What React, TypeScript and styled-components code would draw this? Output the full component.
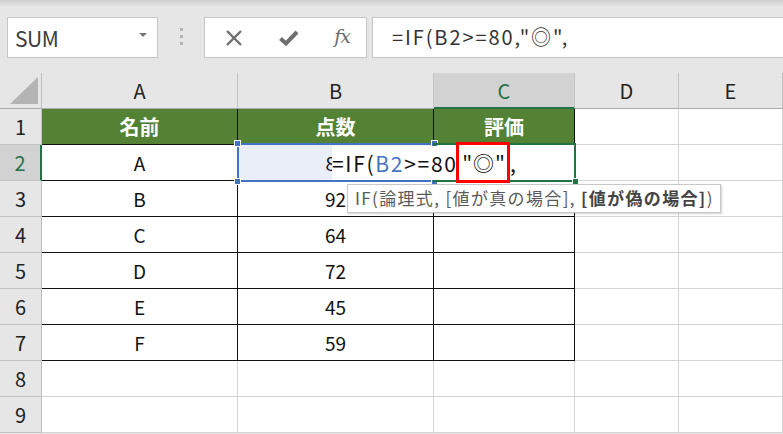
import React from 'react';
import styled, { createGlobalStyle, css } from 'styled-components';

const GlobalStyle = createGlobalStyle`
  html, body {
    margin: 0;
    padding: 0;
    background: #ffffff;
  }
  body {
    font-family: "Noto Sans CJK JP", "Noto Sans", sans-serif;
    color: #222;
  }
`;

const GREEN = '#217346';
const BLUE = '#4472c4';

const Page = styled.div`
  width: 783px;
  height: 434px;
  overflow: hidden;
  background: #e6e6e6;
`;

// toolbar / formula bar
const Toolbar = styled.div`
  height: 73px;
  box-sizing: border-box;
  padding: 17px 0 0 7px;
  display: flex;
  align-items: flex-start;
  background: linear-gradient(#cfcfcf 0px, #e6e6e6 7px);
`;

const NameBox = styled.div`
  width: 151px;
  height: 41px;
  box-sizing: border-box;
  border: 1px solid #c6c6c6;
  background: #fff;
  display: flex;
  align-items: center;
  justify-content: space-between;
  padding: 0 10px 0 7px;
  font-size: 21px;
  color: #3c3c3c;
  letter-spacing: -0.5px;
`;

const DropArrow = styled.span`
  width: 0;
  height: 0;
  border-left: 4px solid transparent;
  border-right: 4px solid transparent;
  border-top: 4px solid #777;
  margin-bottom: 6px;
`;

const Grip = styled.div`
  width: 46px;
  height: 41px;
  display: flex;
  flex-direction: column;
  align-items: center;
  justify-content: center;
  gap: 4px;
  padding-bottom: 2px;
  box-sizing: border-box;
`;

const GripDot = styled.span`
  width: 3px;
  height: 3px;
  background: #b3b3b3;
`;

const ButtonBox = styled.div`
  width: 163px;
  height: 41px;
  box-sizing: border-box;
  border: 1px solid #c6c6c6;
  background: #fff;
  display: grid;
  grid-template-columns: 56px 53px 52px;
  align-items: center;
  justify-items: center;
  padding-left: 1px;
`;

const FxText = styled.span`
  font-family: "DejaVu Serif", "Liberation Serif", serif;
  font-style: italic;
  font-size: 19px;
  color: #6a6a6a;
  letter-spacing: -1px;
  margin: 0 0 3px 2px;
`;

const FormulaBox = styled.div`
  flex: 1;
  margin-left: 5px;
  height: 41px;
  box-sizing: border-box;
  border: 1px solid #c6c6c6;
  border-right: none;
  background: #fff;
  padding-left: 19px;
  line-height: 38px;
  font-size: 20px;
  letter-spacing: 1.9px;
  color: #333;
  white-space: nowrap;
`;

// sheet grid
const Sheet = styled.div`
  position: relative;
  display: grid;
  grid-template-columns: 42px 196px 196px 141px 104px 104px;
  grid-auto-rows: 36px;
  background: #fff;
`;

const Corner = styled.div`
  background: #e6e6e6;
  border-right: 1px solid #bdbdbd;
  border-bottom: 1px solid #ababab;
  box-sizing: border-box;
  display: flex;
  align-items: flex-end;
  justify-content: flex-end;
  padding: 0 3px 4px 0;
`;

const ColHead = styled.div<{ $active?: boolean }>`
  background: ${p => (p.$active ? '#d2d2d2' : '#e6e6e6')};
  border-right: 1px solid #c3c3c3;
  border-bottom: ${p => (p.$active ? `2px solid ${GREEN}` : '1px solid #ababab')};
  box-sizing: border-box;
  display: flex;
  align-items: center;
  justify-content: center;
  font-size: 20px;
  color: ${p => (p.$active ? GREEN : '#222')};
  padding-top: ${p => (p.$active ? '1px' : '0')};
`;

const RowHead = styled.div<{ $active?: boolean }>`
  background: ${p => (p.$active ? '#d2d2d2' : '#e6e6e6')};
  border-right: ${p => (p.$active ? `2px solid ${GREEN}` : '1px solid #bdbdbd')};
  border-bottom: 1px solid #c3c3c3;
  box-sizing: border-box;
  display: flex;
  align-items: center;
  justify-content: center;
  font-size: 20px;
  color: ${p => (p.$active ? GREEN : '#222')};
`;

const Cell = styled.div<{ $boxed?: boolean; $head?: boolean; $fill?: string }>`
  position: relative;
  box-sizing: border-box;
  border-right: 1px solid #d4d4d4;
  border-bottom: 1px solid #d4d4d4;
  display: flex;
  align-items: center;
  justify-content: center;
  font-size: 19px;
  color: #111;
  background: ${p => p.$fill || '#fff'};
  ${p =>
    p.$boxed &&
    css`
      border-right: 1.5px solid #111;
      border-bottom: 1.5px solid #111;
    `}
  ${p =>
    p.$head &&
    css`
      background: #548235;
      color: #fff;
      font-weight: bold;
      font-size: 20px;
    `}
`;

// the value under the in-cell editor, cut off where the editor starts
const ClippedValue = styled.div`
  position: absolute;
  left: 0;
  top: 0;
  bottom: 0;
  width: 94px;
  overflow: hidden;
`;

const ClippedInner = styled.div`
  width: 196px;
  height: 100%;
  display: flex;
  align-items: center;
  justify-content: center;
`;

const SelectFrame = styled.div<{ $color: string }>`
  position: absolute;
  left: -1px;
  top: -2px;
  right: -2px;
  bottom: -2px;
  border: 2px solid ${p => p.$color};
  z-index: 2;
  pointer-events: none;
`;

const Handle = styled.span<{ $color: string; $x: 'l' | 'r'; $y: 't' | 'b' }>`
  position: absolute;
  width: 5px;
  height: 5px;
  background: ${p => p.$color};
  border: 1px solid #fff;
  ${p => (p.$x === 'l' ? 'left: -5px;' : 'right: -5px;')}
  ${p => (p.$y === 't' ? 'top: -5px;' : 'bottom: -5px;')}
`;

const EditOverlay = styled.div`
  position: absolute;
  left: 94px;
  top: 1px;
  height: 34px;
  line-height: 34px;
  background: #fff;
  z-index: 3;
  white-space: nowrap;
  font-size: 21px;
  color: #111;
  padding-right: 4px;
  letter-spacing: 1.7px;
`;

const RefText = styled.span`
  color: ${BLUE};
`;

const RedBox = styled.span`
  position: relative;
  z-index: 1;
  display: inline-block;
  vertical-align: top;
  margin: -4px 0 0 -9px;
  height: 41px;
  line-height: 35px;
  box-sizing: border-box;
  border: 3px solid #ff0000;
  background: #fff;
  padding: 0 1px 0 3px;
  letter-spacing: 1px;
`;

const Tooltip = styled.div`
  position: absolute;
  left: 347px;
  top: 111px;
  height: 29px;
  line-height: 26px;
  box-sizing: border-box;
  padding: 0 6px 0 7px;
  background: #fff;
  border: 1px solid #c8c8c8;
  box-shadow: 1px 1px 2px rgba(0, 0, 0, 0.18);
  font-size: 17px;
  letter-spacing: 1.35px;
  color: #5a5a5a;
  white-space: nowrap;
  z-index: 4;
`;

const Bold = styled.b`
  font-weight: bold;
  color: #444;
`;

const columns = ['A', 'B', 'C', 'D', 'E'];

const rows: Array<[string, string]> = [
  ['A', '85'],
  ['B', '92'],
  ['C', '64'],
  ['D', '72'],
  ['E', '45'],
  ['F', '59'],
];

const CloseIcon = () => (
  <svg width="18" height="18" viewBox="0 0 18 18">
    <path d="M2 2 L16 16 M16 2 L2 16" stroke="#6e6e6e" strokeWidth="2.4" fill="none" />
  </svg>
);

const CheckIcon = () => (
  <svg width="20" height="18" viewBox="0 0 20 18">
    <path d="M1.5 9.5 L7 14.5 L18 3" stroke="#6e6e6e" strokeWidth="4" fill="none" strokeLinejoin="miter" />
  </svg>
);

const CornerMark = () => (
  <svg width="28" height="27" viewBox="0 0 28 27">
    <polygon points="28,0 28,27 0,27" fill="#b4b4b4" />
  </svg>
);

export default function App() {
  return (
    <Page>
      <GlobalStyle />
      <Toolbar>
        <NameBox>
          <span>SUM</span>
          <DropArrow />
        </NameBox>
        <Grip>
          <GripDot />
          <GripDot />
          <GripDot />
        </Grip>
        <ButtonBox>
          <CloseIcon />
          <CheckIcon />
          <FxText>fx</FxText>
        </ButtonBox>
        <FormulaBox>=IF(B2&gt;=80,"◎",</FormulaBox>
      </Toolbar>

      <Sheet>
        <Corner>
          <CornerMark />
        </Corner>
        {columns.map(c => (
          <ColHead key={c} $active={c === 'C'}>
            {c}
          </ColHead>
        ))}

        <RowHead>1</RowHead>
        <Cell $boxed $head>名前</Cell>
        <Cell $boxed $head>点数</Cell>
        <Cell $boxed $head>評価</Cell>
        <Cell />
        <Cell />

        {rows.map(([name, score], i) => {
          const r = i + 2;
          const editing = r === 2;
          return (
            <React.Fragment key={r}>
              <RowHead $active={editing}>{r}</RowHead>
              <Cell $boxed>{name}</Cell>
              <Cell $boxed $fill={editing ? '#e9eef8' : undefined}>
                {editing ? (
                  <>
                    <ClippedValue>
                      <ClippedInner>{score}</ClippedInner>
                    </ClippedValue>
                    <SelectFrame $color={BLUE}>
                      <Handle $color={BLUE} $x="l" $y="t" />
                      <Handle $color={BLUE} $x="r" $y="t" />
                      <Handle $color={BLUE} $x="l" $y="b" />
                      <Handle $color={BLUE} $x="r" $y="b" />
                    </SelectFrame>
                    <EditOverlay>
                      =IF(<RefText>B2</RefText>&gt;=80,<RedBox>"◎"</RedBox>,
                    </EditOverlay>
                  </>
                ) : (
                  score
                )}
              </Cell>
              <Cell $boxed>
                {editing && (
                  <SelectFrame $color={GREEN}>
                    <Handle $color={GREEN} $x="r" $y="b" />
                  </SelectFrame>
                )}
              </Cell>
              <Cell />
              <Cell />
            </React.Fragment>
          );
        })}

        {[8, 9].map(r => (
          <React.Fragment key={r}>
            <RowHead>{r}</RowHead>
            <Cell />
            <Cell />
            <Cell />
            <Cell />
            <Cell />
          </React.Fragment>
        ))}

        <Tooltip>
          IF(論理式, [値が真の場合], <Bold>[値が偽の場合]</Bold>)
        </Tooltip>
      </Sheet>
    </Page>
  );
}
